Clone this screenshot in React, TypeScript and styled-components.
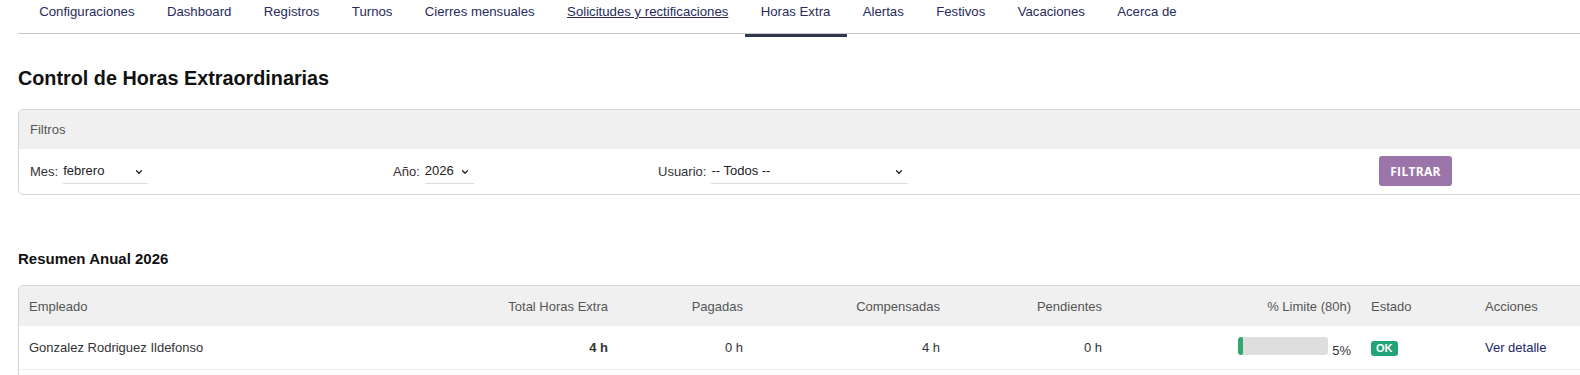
import React from 'react';
import styled, { createGlobalStyle } from 'styled-components';
import { ChevronDown } from 'lucide-react';

const GlobalStyle = createGlobalStyle`
  html, body {
    margin: 0;
    padding: 0;
    overflow: hidden;
    background: #fff;
  }

  body {
    font-family: "Liberation Sans", Arial, sans-serif;
    font-size: 13px;
    color: #333;
  }
`;

const Page = styled.div`
  width: 1640px;
  padding-left: 18px;
`;

const Nav = styled.nav`
  display: flex;
  height: 33px;
  padding-left: 5px;
  border-bottom: 1px solid #c8c8c8;
`;

const NavItem = styled.a<{ $active?: boolean; $underline?: boolean }>`
  display: block;
  height: 30px;
  padding: 4px 16.2px 0;
  line-height: 16px;
  font-size: 13.2px;
  color: #262b5b;
  text-decoration: ${(p) => (p.$underline ? 'underline' : 'none')};
  border-bottom: 3px solid ${(p) => (p.$active ? '#2e3650' : 'transparent')};
  margin-bottom: -1px;
  cursor: pointer;
`;

const Title = styled.h2`
  margin: 32px 0 19px;
  font-size: 19.8px;
  line-height: 24px;
  font-weight: 700;
  color: #111;
`;

const Card = styled.section`
  border: 1px solid #d4d4d4;
  border-radius: 5px;
  overflow: hidden;
`;

const CardHeader = styled.div`
  height: 39px;
  padding: 0 11px;
  display: flex;
  align-items: center;
  background: #f0f0f0;
  color: #555;
  font-size: 13px;
`;

const FilterRow = styled.div`
  display: grid;
  grid-template-columns: 363px 265px 721px auto;
  align-items: center;
  padding: 7px 11px 8px;
`;

const Field = styled.label`
  display: flex;
  align-items: center;
  gap: 5px;
  color: #333;
`;

const SelectWrap = styled.span<{ $width: number }>`
  position: relative;
  display: inline-block;
  width: ${(p) => p.$width}px;

  svg {
    position: absolute;
    right: 4px;
    top: 9px;
    pointer-events: none;
    color: #222;
  }
`;

const Select = styled.select`
  appearance: none;
  width: 100%;
  height: 26px;
  border: none;
  border-bottom: 1px solid #dcdcdc;
  background: transparent;
  padding: 0 18px 0 0;
  font-family: inherit;
  font-size: 13px;
  color: #222;
  outline: none;
`;

const FilterButton = styled.button`
  width: 73px;
  height: 30px;
  border: none;
  border-radius: 3px;
  background: #9b74a9;
  color: #fff;
  font-family: "Open Sans", "Liberation Sans", sans-serif;
  font-weight: 700;
  font-size: 12px;
  letter-spacing: 0.3px;
  cursor: pointer;
`;

const SectionTitle = styled.h3`
  margin: 55px 0 17px;
  font-size: 15px;
  line-height: 18px;
  font-weight: 700;
  color: #111;
`;

const Table = styled.table`
  width: 100%;
  border-collapse: collapse;
  table-layout: fixed;
`;

const Th = styled.th<{ $align?: string; $w?: number }>`
  box-sizing: border-box;
  width: ${(p) => (p.$w ? `${p.$w}px` : 'auto')};
  height: 40px;
  padding: 0 10px;
  background: #f0f0f0;
  font-weight: 400;
  color: #555;
  text-align: ${(p) => p.$align || 'left'};
`;

const Td = styled.td<{ $align?: string; $bold?: boolean }>`
  height: 43px;
  padding: 0 10px;
  border-bottom: 1px solid #eee;
  color: #333;
  text-align: ${(p) => p.$align || 'left'};
  font-weight: ${(p) => (p.$bold ? 700 : 400)};
  white-space: nowrap;
`;

const Bar = styled.span`
  display: inline-block;
  width: 90px;
  height: 18px;
  background: #dedede;
  border-radius: 3px;
  overflow: hidden;
  margin-right: 4px;
`;

const BarFill = styled.span`
  display: block;
  height: 100%;
  background: #2faa6c;
  border-radius: 2px;
`;

const Badge = styled.span`
  display: inline-block;
  padding: 2px 5px;
  border-radius: 3px;
  background: #22a37a;
  color: #fff;
  font-size: 11px;
  font-weight: 700;
  line-height: 11px;
`;

const Link = styled.a`
  color: #1d2768;
  text-decoration: none;
  cursor: pointer;
`;

const navItems = [
  'Configuraciones',
  'Dashboard',
  'Registros',
  'Turnos',
  'Cierres mensuales',
  'Solicitudes y rectificaciones',
  'Horas Extra',
  'Alertas',
  'Festivos',
  'Vacaciones',
  'Acerca de',
];

const rows = [{ name: 'Gonzalez Rodriguez Ildefonso', total: 4, paid: 0, comp: 4, pending: 0 }];

const App = () => (
  <Page>
    <GlobalStyle />
    <Nav>
      {navItems.map((item) => (
        <NavItem
          key={item}
          $active={item === 'Horas Extra'}
          $underline={item === 'Solicitudes y rectificaciones'}
        >
          {item}
        </NavItem>
      ))}
    </Nav>

    <Title>Control de Horas Extraordinarias</Title>

    <Card>
      <CardHeader>Filtros</CardHeader>
      <FilterRow>
        <Field>
          Mes:
          <SelectWrap $width={85}>
            <Select defaultValue="2">
              <option value="1">enero</option>
              <option value="2">febrero</option>
              <option value="3">marzo</option>
            </Select>
            <ChevronDown size={10} strokeWidth={3} />
          </SelectWrap>
        </Field>
        <Field>
          Año:
          <SelectWrap $width={49}>
            <Select defaultValue="2026">
              <option>2025</option>
              <option>2026</option>
            </Select>
            <ChevronDown size={10} strokeWidth={3} />
          </SelectWrap>
        </Field>
        <Field>
          Usuario:
          <SelectWrap $width={197}>
            <Select defaultValue="">
              <option value="">-- Todos --</option>
            </Select>
            <ChevronDown size={10} strokeWidth={3} />
          </SelectWrap>
        </Field>
        <div>
          <FilterButton>FILTRAR</FilterButton>
        </div>
      </FilterRow>
    </Card>

    <SectionTitle>Resumen Anual 2026</SectionTitle>

    <Card>
      <Table>
        <thead>
          <tr>
            <Th $w={379}>Empleado</Th>
            <Th $w={220} $align="right">Total Horas Extra</Th>
            <Th $w={135} $align="right">Pagadas</Th>
            <Th $w={197} $align="right">Compensadas</Th>
            <Th $w={162} $align="right">Pendientes</Th>
            <Th $w={249} $align="right">% Limite (80h)</Th>
            <Th $w={114}>Estado</Th>
            <Th>Acciones</Th>
          </tr>
        </thead>
        <tbody>
          {rows.map((r) => {
            const pct = Math.round((r.total / 80) * 100);
            return (
              <tr key={r.name}>
                <Td>{r.name}</Td>
                <Td $align="right" $bold>{r.total} h</Td>
                <Td $align="right">{r.paid} h</Td>
                <Td $align="right">{r.comp} h</Td>
                <Td $align="right">{r.pending} h</Td>
                <Td $align="right">
                  <Bar>
                    <BarFill style={{ width: `${pct}%` }} />
                  </Bar>
                  {pct}%
                </Td>
                <Td>
                  <Badge>OK</Badge>
                </Td>
                <Td>
                  <Link>Ver detalle</Link>
                </Td>
              </tr>
            );
          })}
          <tr>
            <Td colSpan={8} />
          </tr>
        </tbody>
      </Table>
    </Card>
  </Page>
);

export default App;
